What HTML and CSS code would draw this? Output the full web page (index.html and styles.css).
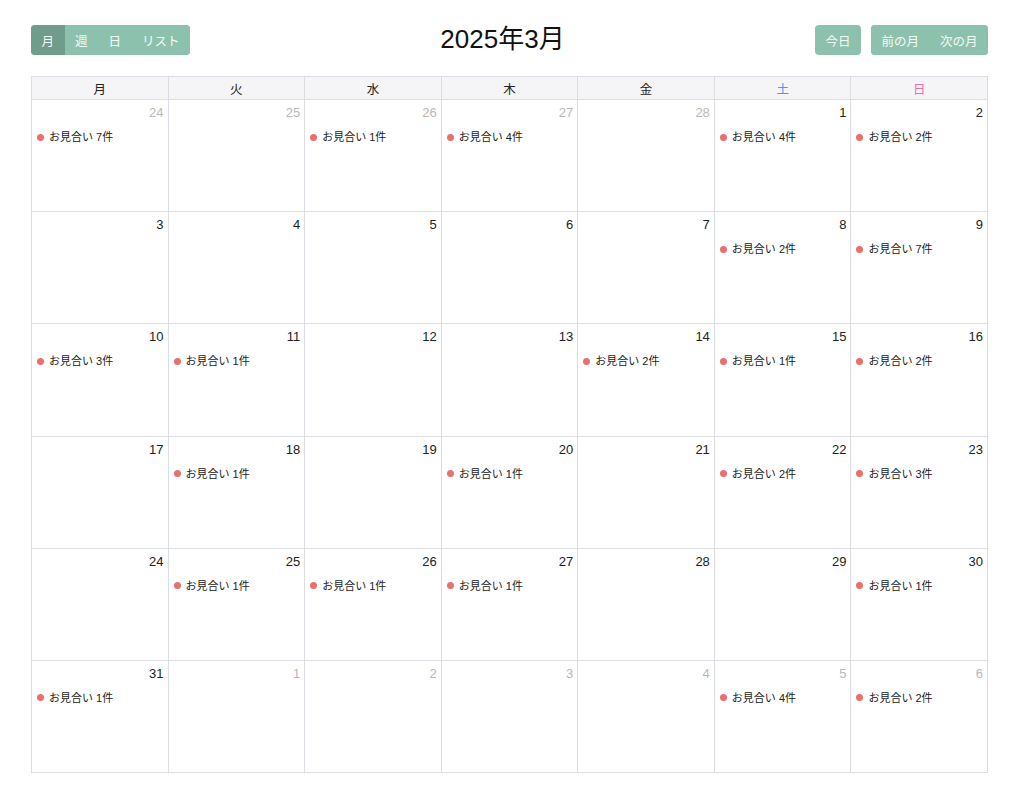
FILE: index.html
```html
<!DOCTYPE html>
<html lang="ja">
<head>
<meta charset="utf-8">
<link rel="stylesheet" href="styles.css">
</head>
<body>
<div class="page">
  <div class="toolbar">
    <div class="btn-group">
      <button class="btn active">月</button>
      <button class="btn">週</button>
      <button class="btn">日</button>
      <button class="btn">リスト</button>
    </div>
    <h1 class="title">2025年3月</h1>
    <div class="right">
      <div class="btn-group"><button class="btn">今日</button></div>
      <div class="btn-group">
        <button class="btn">前の月</button>
        <button class="btn">次の月</button>
      </div>
    </div>
  </div>
  <div class="cal">
    <div class="head">月</div><div class="head">火</div><div class="head">水</div><div class="head">木</div><div class="head">金</div><div class="head sat">土</div><div class="head sun">日</div>

    <div class="cell other"><div class="num">24</div><div class="ev"><span class="dot"></span>お見合い 7件</div></div>
    <div class="cell other"><div class="num">25</div></div>
    <div class="cell other"><div class="num">26</div><div class="ev"><span class="dot"></span>お見合い 1件</div></div>
    <div class="cell other"><div class="num">27</div><div class="ev"><span class="dot"></span>お見合い 4件</div></div>
    <div class="cell other"><div class="num">28</div></div>
    <div class="cell"><div class="num">1</div><div class="ev"><span class="dot"></span>お見合い 4件</div></div>
    <div class="cell"><div class="num">2</div><div class="ev"><span class="dot"></span>お見合い 2件</div></div>

    <div class="cell"><div class="num">3</div></div>
    <div class="cell"><div class="num">4</div></div>
    <div class="cell"><div class="num">5</div></div>
    <div class="cell"><div class="num">6</div></div>
    <div class="cell"><div class="num">7</div></div>
    <div class="cell"><div class="num">8</div><div class="ev"><span class="dot"></span>お見合い 2件</div></div>
    <div class="cell"><div class="num">9</div><div class="ev"><span class="dot"></span>お見合い 7件</div></div>

    <div class="cell"><div class="num">10</div><div class="ev"><span class="dot"></span>お見合い 3件</div></div>
    <div class="cell"><div class="num">11</div><div class="ev"><span class="dot"></span>お見合い 1件</div></div>
    <div class="cell"><div class="num">12</div></div>
    <div class="cell"><div class="num">13</div></div>
    <div class="cell"><div class="num">14</div><div class="ev"><span class="dot"></span>お見合い 2件</div></div>
    <div class="cell"><div class="num">15</div><div class="ev"><span class="dot"></span>お見合い 1件</div></div>
    <div class="cell"><div class="num">16</div><div class="ev"><span class="dot"></span>お見合い 2件</div></div>

    <div class="cell"><div class="num">17</div></div>
    <div class="cell"><div class="num">18</div><div class="ev"><span class="dot"></span>お見合い 1件</div></div>
    <div class="cell"><div class="num">19</div></div>
    <div class="cell"><div class="num">20</div><div class="ev"><span class="dot"></span>お見合い 1件</div></div>
    <div class="cell"><div class="num">21</div></div>
    <div class="cell"><div class="num">22</div><div class="ev"><span class="dot"></span>お見合い 2件</div></div>
    <div class="cell"><div class="num">23</div><div class="ev"><span class="dot"></span>お見合い 3件</div></div>

    <div class="cell"><div class="num">24</div></div>
    <div class="cell"><div class="num">25</div><div class="ev"><span class="dot"></span>お見合い 1件</div></div>
    <div class="cell"><div class="num">26</div><div class="ev"><span class="dot"></span>お見合い 1件</div></div>
    <div class="cell"><div class="num">27</div><div class="ev"><span class="dot"></span>お見合い 1件</div></div>
    <div class="cell"><div class="num">28</div></div>
    <div class="cell"><div class="num">29</div></div>
    <div class="cell"><div class="num">30</div><div class="ev"><span class="dot"></span>お見合い 1件</div></div>

    <div class="cell"><div class="num">31</div><div class="ev"><span class="dot"></span>お見合い 1件</div></div>
    <div class="cell other"><div class="num">1</div></div>
    <div class="cell other"><div class="num">2</div></div>
    <div class="cell other"><div class="num">3</div></div>
    <div class="cell other"><div class="num">4</div></div>
    <div class="cell other"><div class="num">5</div><div class="ev"><span class="dot"></span>お見合い 4件</div></div>
    <div class="cell other"><div class="num">6</div><div class="ev"><span class="dot"></span>お見合い 2件</div></div>
  </div>
</div>
</body>
</html>
```
FILE: styles.css
```css
* { box-sizing: border-box; }
body {
  margin: 0;
  background: #fff;
  font-family: "Liberation Sans", "Noto Sans CJK JP", sans-serif;
  color: #222;
}
.page {
  padding: 25px 36px 0 31px;
}
.toolbar {
  display: flex;
  justify-content: space-between;
  align-items: center;
  height: 30px;
  margin-bottom: 21px;
}
.btn-group {
  display: flex;
  border-radius: 4px;
  overflow: hidden;
  background: #8cc2ad;
}
.btn {
  border: 0;
  background: #8cc2ad;
  color: #f4faf7;
  font-family: inherit;
  font-size: 12.5px;
  height: 30px;
  padding: 0 10.5px;
  cursor: pointer;
}
.btn.active {
  background: #6f9c8b;
}
.title {
  margin: 0;
  font-size: 26px;
  line-height: 30px;
  font-weight: 400;
  color: #111;
  position: relative;
  top: -1px;
}
.right {
  display: flex;
  gap: 10px;
}
.cal {
  display: grid;
  grid-template-columns: repeat(7, 1fr);
  grid-template-rows: 23px repeat(6, 112.2px);
  border-top: 1px solid #dcdde3;
  border-left: 1px solid #dcdde3;
  width: 957px;
}
.head {
  background: #f5f5f7;
  border-right: 1px solid #dcdde3;
  border-bottom: 1px solid #dcdde3;
  font-size: 12.5px;
  display: flex;
  align-items: center;
  justify-content: center;
  color: #222;
}
.head.sat { color: #3c9ff5; }
.head.sun { color: #ef6ea7; }
.cell {
  border-right: 1px solid #dcdde3;
  border-bottom: 1px solid #dcdde3;
  padding: 5px 4px 0 5px;
}
.num {
  text-align: right;
  font-size: 13px;
  line-height: 16px;
  color: #222;
}
.other .num { color: #b8b8b8; }
.ev {
  margin-top: 9px;
  display: flex;
  align-items: center;
  font-size: 11px;
  line-height: 14px;
  color: #222;
}
.dot {
  width: 7px;
  height: 7px;
  border-radius: 50%;
  background: #e8706e;
  margin-right: 5px;
  flex: none;
}
```
